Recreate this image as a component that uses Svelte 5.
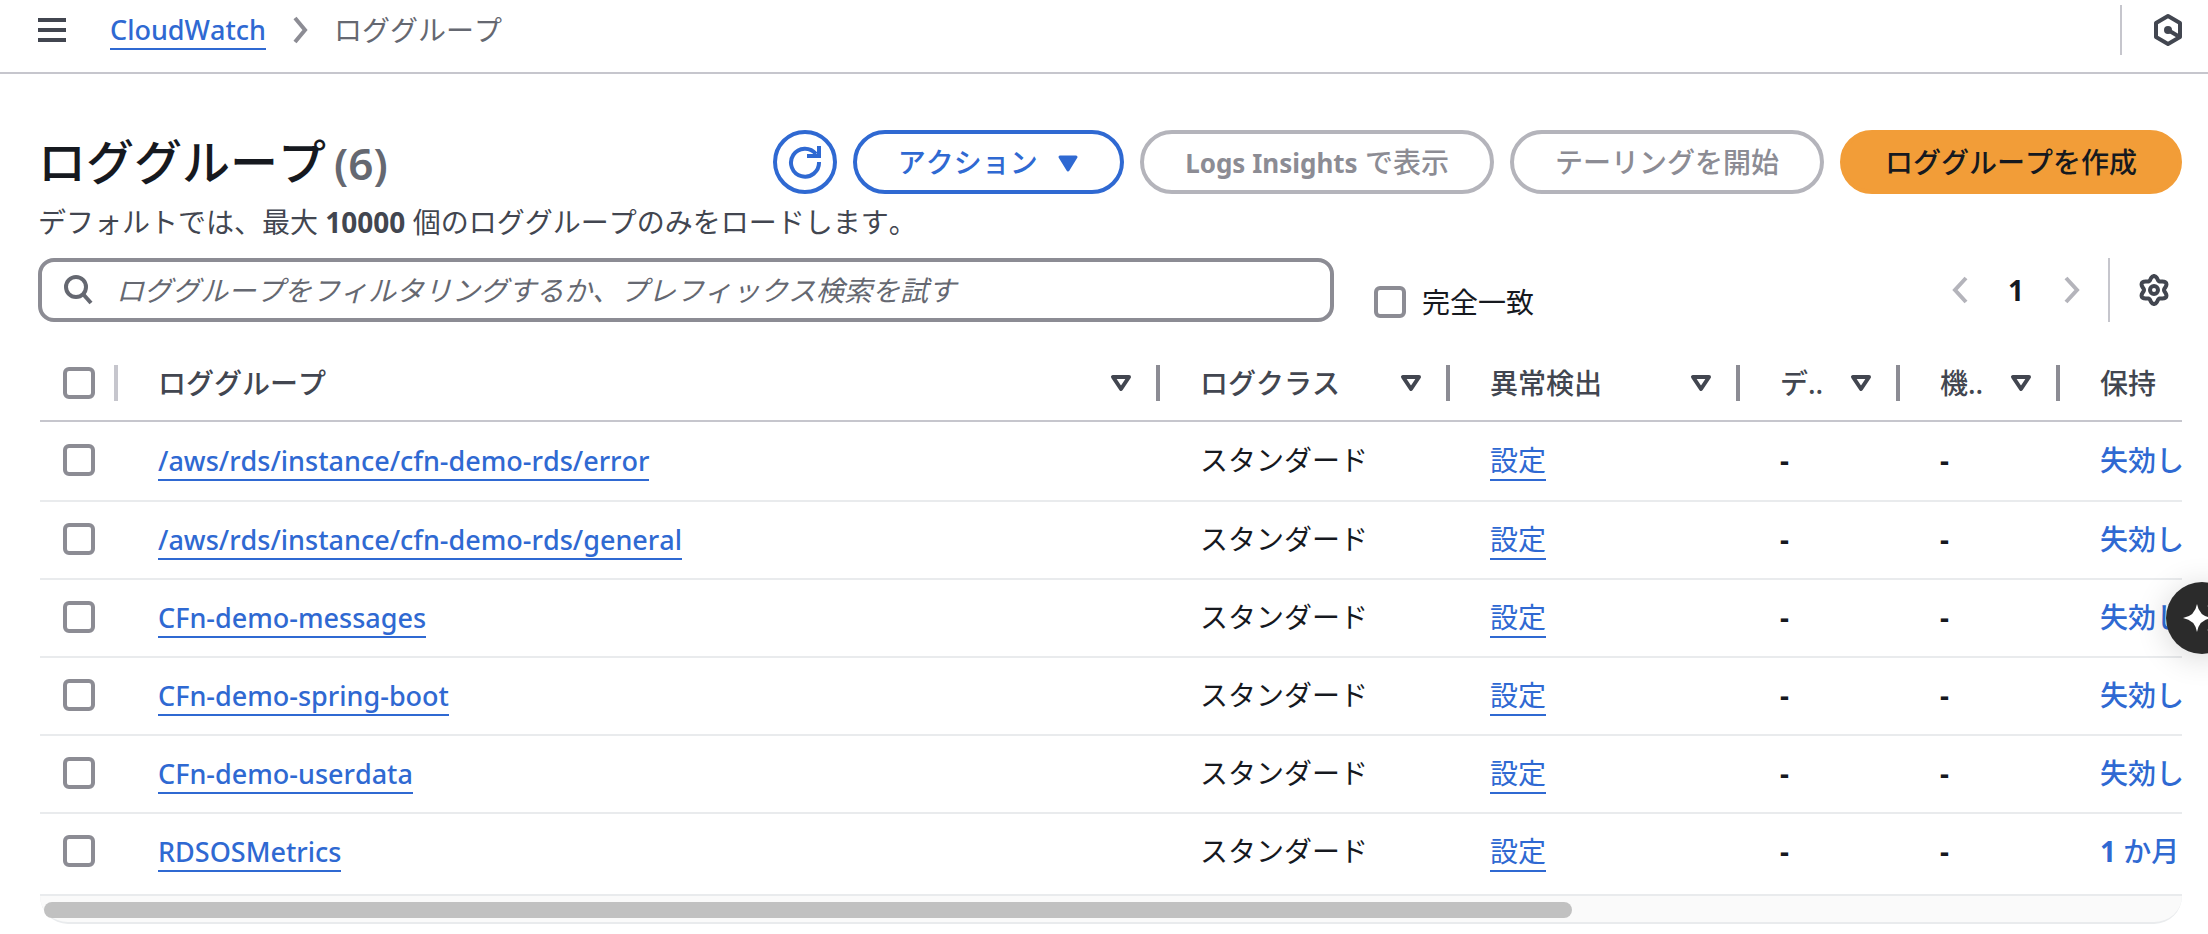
<script>
  const rows = [
    { name: '/aws/rds/instance/cfn-demo-rds/error', keep: '失効しない' },
    { name: '/aws/rds/instance/cfn-demo-rds/general', keep: '失効しない' },
    { name: 'CFn-demo-messages', keep: '失効しない' },
    { name: 'CFn-demo-spring-boot', keep: '失効しない' },
    { name: 'CFn-demo-userdata', keep: '失効しない' },
    { name: 'RDSOSMetrics', count: '1', keep: ' か月' }
  ];
  const columns = ['ロググループ', 'ログクラス', '異常検出', 'デ..', '機..'];

  // Six-lobed outline of the settings gear, centred in a 32px box.
  const gear = Array.from({ length: 72 }, (_, i) => {
    const a = (i * Math.PI) / 36;
    const r = 12 - 2 * Math.cos(6 * a);
    return `${(16 + r * Math.cos(a)).toFixed(2)},${(16 + r * Math.sin(a)).toFixed(2)}`;
  }).join(' ');
</script>

<header class="topbar">
  <button class="plain menu" aria-label="メニュー">
    <svg width="28" height="26" viewBox="0 0 28 26"><path d="M0 3h28M0 13h28M0 23h28" stroke="#424650" stroke-width="4" fill="none" /></svg>
  </button>
  <nav class="crumbs">
    <a href="#cloudwatch">CloudWatch</a>
    <svg width="20" height="28" viewBox="0 0 20 28"><path d="M5 2l10 12L5 26" stroke="#8c8c94" stroke-width="4" fill="none" /></svg>
    <span>ロググループ</span>
  </nav>
  <button class="plain assist" aria-label="アシスタント">
    <svg width="32" height="34" viewBox="0 0 32 34">
      <path d="M16 3l12 7v14l-12 7-12-7V10z" stroke="#424650" stroke-width="4" stroke-linejoin="round" fill="none" />
      <circle cx="16" cy="17" r="4" fill="#424650" />
      <path d="M16 17l10 6" stroke="#424650" stroke-width="4" fill="none" />
    </svg>
  </button>
</header>

<main>
  <div class="heading">
    <h1>ロググループ<span>(6)</span></h1>
    <div class="actions">
      <button class="btn round" aria-label="更新">
        <svg width="34" height="34" viewBox="0 0 34 34" fill="none" stroke="#2f69d2" stroke-width="4">
          <path d="M31 17A14 14 0 1 1 28 9" /><path d="M31 1v10H19" />
        </svg>
      </button>
      <button class="btn">アクション
        <svg class="caret" width="22" height="18" viewBox="0 0 22 18"><path d="M3 2h16l-8 13z" fill="#2f69d2" stroke="#2f69d2" stroke-width="3" stroke-linejoin="round" /></svg>
      </button>
      <button class="btn" disabled><b>Logs Insights</b> で表示</button>
      <button class="btn" disabled>テーリングを開始</button>
      <button class="btn primary">ロググループを作成</button>
    </div>
  </div>
  <p class="note">デフォルトでは、最大 <b>10000</b> 個のロググループのみをロードします。</p>

  <div class="tools">
    <label class="search">
      <svg width="32" height="32" viewBox="0 0 32 32" fill="none" stroke="#656871" stroke-width="4"><circle cx="14" cy="13" r="10" /><path d="M21 20l8 9" /></svg>
      <input type="search" aria-label="ロググループをフィルタリング" placeholder="ロググループをフィルタリングするか、プレフィックス検索を試す" />
    </label>
    <label class="exact"><input type="checkbox" />完全一致</label>
    <div class="pager">
      <button class="plain" aria-label="前のページ"><svg width="20" height="28" viewBox="0 0 20 28"><path d="M16 2L5 14l11 12" stroke="#b4b4bb" stroke-width="4" fill="none" /></svg></button>
      <button class="plain page">1</button>
      <button class="plain" aria-label="次のページ"><svg width="20" height="28" viewBox="0 0 20 28"><path d="M4 2l11 12L4 26" stroke="#b4b4bb" stroke-width="4" fill="none" /></svg></button>
    </div>
    <button class="plain gear" aria-label="設定">
      <svg width="32" height="32" viewBox="0 0 32 32" fill="none" stroke="#424650" stroke-width="4" stroke-linejoin="round"><circle cx="16" cy="16" r="4" /><polygon points={gear} /></svg>
    </button>
  </div>

  <div class="scroller">
    <table>
      <colgroup><col class="c-check" /><col /><col class="c-mid" /><col class="c-mid" /><col class="c-small" /><col class="c-small" /><col class="c-last" /></colgroup>
      <thead>
        <tr>
          <th><div class="head pick"><input type="checkbox" aria-label="すべて選択" /></div></th>
          {#each columns as label}
            <th><div class="head">{label}
              <svg width="22" height="18" viewBox="0 0 22 18"><path d="M3 3h16l-8 12z" fill="none" stroke="#424650" stroke-width="4" stroke-linejoin="round" /></svg>
            </div></th>
          {/each}
          <th><div class="head last">保持</div></th>
        </tr>
      </thead>
      <tbody>
        {#each rows as row}
          <tr>
            <td class="pick"><input type="checkbox" aria-label={row.name} /></td>
            <td><a href="#group">{row.name}</a></td>
            <td>スタンダード</td>
            <td><a href="#anomaly" class="jp">設定</a></td>
            <td class="dash">-</td>
            <td class="dash">-</td>
            <td><a href="#keep" class="keep">{#if row.count}<b>{row.count}</b>{/if}{row.keep}</a></td>
          </tr>
        {/each}
      </tbody>
    </table>
    <div class="track"><div class="thumb"></div></div>
  </div>
</main>

<button class="chat" aria-label="チャット">
  <svg width="40" height="40" viewBox="0 0 40 40" fill="#fff"><path d="M15 6q2 12 14 14-12 2-14 14-2-12-14-14 12-2 14-14z" /><path d="M31 2q1 5 6 6-5 1-6 6-1-5-6-6 5-1 6-6zM31 26q1 5 6 6-5 1-6 6-1-5-6-6 5-1 6-6z" /></svg>
</button>

<style>
  :global(body) { background: #fff; overflow: hidden; }
  :global(#app) {
    font-family: "Noto Sans", "Noto Sans CJK JP", sans-serif;
    font-size: 28px; line-height: 40px; color: #16191f; font-kerning: none;
  }
  :global(*) { box-sizing: border-box; }
  button, input { font: inherit; color: inherit; font-kerning: none; }
  .plain { background: none; border: 0; padding: 0; display: flex; }
  a { color: #2f69d2; text-decoration: none; border-bottom: 2px solid #2f69d2; font-size: 27px; font-weight: 500; }
  .topbar { display: flex; align-items: center; height: 74px; padding: 0 24px 12px 38px; border-bottom: 2px solid #c6c6cd; }
  .crumbs { display: flex; align-items: center; gap: 24px; margin-left: 44px; color: #656871; line-height: 36px; }
  .crumbs a { padding-top: 2px; }
  .assist { margin-left: auto; border-left: 2px solid #c6c6cd; height: 50px; align-items: center; padding-left: 30px; }
  main { padding: 56px 26px 0 38px; }
  .heading { display: flex; justify-content: space-between; align-items: center; height: 64px; }
  h1 { display: flex; align-items: baseline; gap: 8px; margin: 0; font-size: 48px; line-height: 64px; font-weight: 500; white-space: nowrap; }
  h1 span { color: #656871; font-size: 44px; font-weight: 600; }
  .actions { display: flex; gap: 16px; }
  .btn { height: 64px; border: 4px solid #2f69d2; border-radius: 32px; background: #fff; color: #2f69d2; padding: 0 41px; font-weight: 500; white-space: nowrap; }
  .btn:disabled { border-color: #b4b4bb; color: #8c8c94; }
  .btn b { font-size: 26px; }
  .btn.round { width: 64px; padding: 0; display: grid; place-items: center; }
  .caret { margin-left: 12px; }
  .primary { background: #f29d38; border-color: #f29d38; color: #16191f; }
  .note { margin: 8px 0 16px; color: #424650; line-height: 40px; }
  .tools { display: flex; height: 64px; }
  .search { flex: 0 1 1296px; display: flex; align-items: center; border: 4px solid #8c8c94; border-radius: 16px; padding: 0 20px; gap: 22px; }
  .search input { flex: 1; border: 0; outline: 0; background: none; padding: 0; min-width: 0; }
  .search input::placeholder { color: #656871; font-style: italic; opacity: 1; }
  input[type="checkbox"] { appearance: none; margin: 0; width: 32px; height: 32px; border: 4px solid #8c8c94; border-radius: 6px; background: #fff; flex: none; display: block; }
  .exact { display: flex; gap: 16px; align-items: center; margin: 24px 0 0 40px; height: 40px; white-space: nowrap; }
  .pager { display: flex; align-items: center; margin: 0 26px 0 auto; gap: 38px; }
  .page { font-weight: 700; }
  .gear { border-left: 2px solid #c6c6cd; height: 64px; align-items: center; padding: 0 12px 0 28px; }
  .scroller { overflow: hidden; margin: 24px 0 0 2px; }
  table { table-layout: fixed; border-collapse: separate; border-spacing: 0; width: 100%; }
  .c-check { width: 78px; }
  .c-mid { width: 290px; }
  .c-small { width: 160px; }
  .c-last { width: 122px; }
  th { padding: 0; height: 76px; text-align: left; font-weight: 500; color: #424650; border-bottom: 2px solid #c6c6cd; }
  .head { display: flex; align-items: center; justify-content: space-between; height: 36px; padding: 0 24px 0 40px; border-right: 4px solid #8c8c94; white-space: nowrap; }
  .head.pick { border-color: #c6c6cd; }
  .head.last { border: 0; padding-right: 0; }
  td { padding: 0 0 2px 40px; height: 78px; border-bottom: 2px solid #e9ebed; white-space: nowrap; }
  tr:first-child td { height: 80px; }
  tr:last-child td { height: 76px; border: 0; }
  .head.pick, td.pick { padding-left: 23px; }
  .jp { font-size: 28px; font-weight: 400; }
  .keep { border: 0; font-size: 28px; }
  .dash { font-weight: 700; }
  .track { height: 30px; margin-top: 4px; border: solid #e9ebed; border-width: 2px 0; background: #fafafa; border-radius: 0 0 28px 28px; padding: 6px 4px; }
  .thumb { height: 16px; width: 71.6%; border-radius: 8px; background: #c1c1c1; }
  .chat { position: absolute; right: -30px; top: 582px; width: 72px; height: 72px; border: 0; border-radius: 50%; background: #2b2b2b; padding: 0 0 0 16px; box-shadow: 0 4px 32px rgba(0, 0, 0, 0.16); display: flex; align-items: center; }
</style>
